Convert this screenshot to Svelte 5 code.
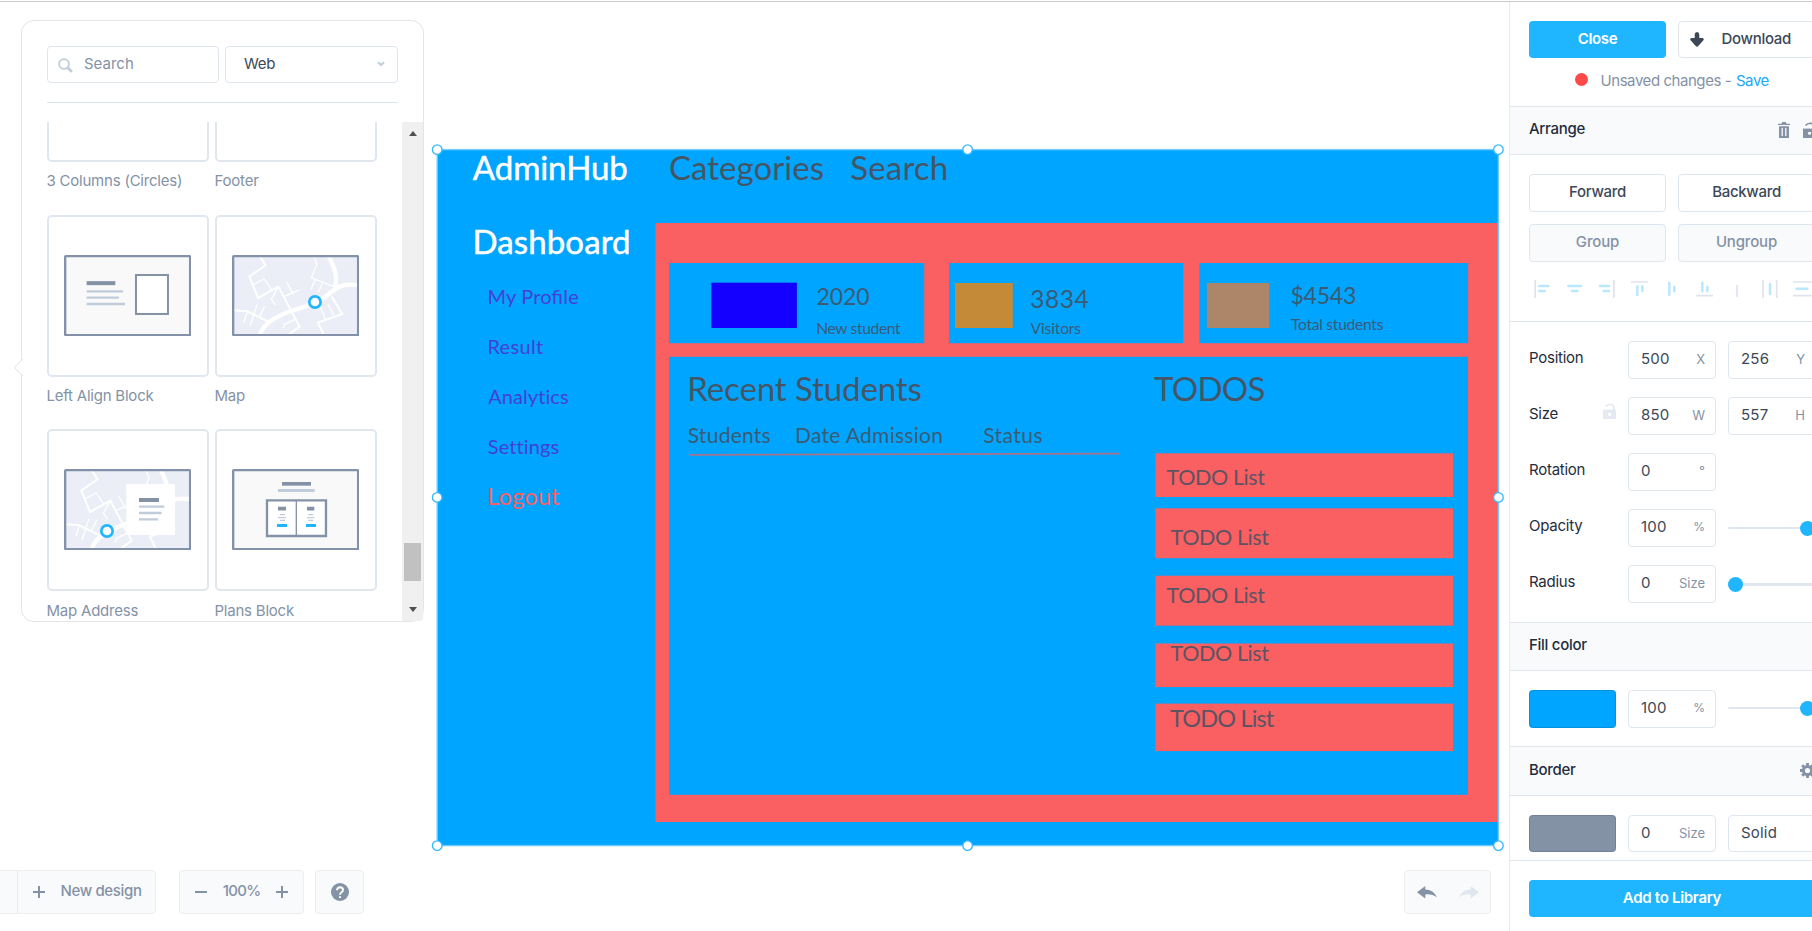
<script>
  const labels = [
    // text, x, baseline, size, length, colour
    ['AdminHub', 472.8, 180, 33, 155, '#fff'],
    ['Categories', 669, 180, 33, 155, '#455565'],
    ['Search', 850.3, 180, 33, 97.9, '#455565'],
    ['Dashboard', 472.6, 254.2, 33, 158, '#fff'],
    ['My Profile', 487.4, 303.5, 20, 91.3, '#4540d2'],
    ['Result', 487.4, 353.5, 20, 55.8, '#4540d2'],
    ['Analytics', 488.3, 403.5, 20, 80.3, '#4540d2'],
    ['Settings', 487.8, 453.7, 20, 71.3, '#4540d2'],
    ['Logout', 487.2, 504.5, 23, 72.4, '#f95f62'],
    ['2020', 816.6, 305.2, 23, 53, '#3b5b75'],
    ['New student', 816.2, 334.3, 15.6, 84.4, '#3b5b75'],
    ['3834', 1030.3, 308.4, 24.5, 58.4, '#3b5b75'],
    ['Visitors', 1030.5, 334.2, 15.6, 50.6, '#3b5b75'],
    ['$4543', 1290.5, 304.2, 23, 65.8, '#3b5b75'],
    ['Total students', 1291, 330.4, 15.6, 92.4, '#3b5b75'],
    ['Recent Students', 687.3, 401.2, 33, 234.5, '#455565'],
    ['Students', 687.7, 443.2, 21, 83, '#3b5b75'],
    ['Date Admission', 795, 443.2, 21, 148, '#3b5b75'],
    ['Status', 983.2, 443.2, 21, 59.3, '#3b5b75'],
    ['TODOS', 1154, 401.2, 33, 111.5, '#455565'],
    ['TODO List', 1166.6, 485.3, 21.5, 98.3, '#5c5463'],
    ['TODO List', 1170.6, 544.5, 21.5, 98.3, '#5c5463'],
    ['TODO List', 1166.6, 603.3, 21.5, 98.3, '#5c5463'],
    ['TODO List', 1170.6, 660.5, 21.5, 98.3, '#5c5463'],
    ['TODO List', 1170, 726.5, 23.5, 104.2, '#5c5463']
  ];
  const todos = [[453.3, 43.7], [508.3, 49.9], [575.7, 50], [643.5, 43.6], [703.6, 47.5]];
  const handles = [
    [437.2, 149.6], [967.6, 149.6], [1498.4, 149.6],
    [437.2, 497.4], [1498.4, 497.4],
    [437.2, 845.6], [967.6, 845.6], [1498.4, 845.6]
  ];
</script>

{#snippet map()}
  <g transform="translate(-12 -15)" fill="none" stroke="#fff">
    <path d="M15 18h376v238H15z" fill="#ebeef6" stroke="none" />
    <g stroke-width="6">
      <path d="M96 20L113 46L64 79L90 144L151 110L215 230L182 254" />
      <path d="M15 181L58 184L122 216" />
      <path d="M311 140L343 192L270 218L287 254" />
    </g>
    <path d="M94 258C106 218 146 199 195 181C246 166 286 152 312 124C337 104 360 101 394 106" stroke-width="13" />
    <path d="M303 20C320 52 330 83 321 110" stroke-width="13" />
    <g stroke-width="4">
      <path d="M75 104L109 87L130 119M151 110L130 148L144 166M176 96L196 133M166 141L214 120" />
      <path d="M258 20L267 42L250 84L320 111M262 88L248 120M285 96L271 127" />
      <path d="M58 184L48 217M87 164L66 228M110 169L93 203M200 208L170 223L165 236M277 170L292 207M300 164L318 196" />
    </g>
  </g>
{/snippet}

{#snippet frame()}
  <rect x="3.5" y="3.5" width="375" height="237" rx="2" fill="none" stroke="#8492a9" stroke-width="7" />
{/snippet}

{#snippet lock()}
  <svg class="lock" viewBox="0 0 13 16"><path d="M2.6 3.6Q4.6.9 7.8 1.3Q11 1.8 11 5.5V7" fill="none" stroke="currentColor" stroke-width="1.7" /><path d="M0 6.600h13V16H0z" fill="currentColor" /><path d="M5.200 10h2.700v2.600H5.200z" fill="#fff" /></svg>
{/snippet}

{#snippet field(value, unit)}
  <div class="field"><span>{value}</span><small class:percent={unit === '%'}>{unit}</small></div>
{/snippet}

<div class="page">
  <main>
    <svg class="canvas" width="1509" height="931" viewBox="0 0 1509 931">
      <rect x="437" y="149.5" width="1061.5" height="696" fill="#00a5ff" />
      <rect x="655.3" y="223" width="843" height="599" fill="#fa5f62" />
      <g fill="#00a5ff">
        <rect x="669" y="263" width="255.2" height="80.2" />
        <rect x="949" y="263" width="234.3" height="80.2" />
        <rect x="1199.300" y="263" width="268.8" height="80.2" />
        <rect x="669" y="356.8" width="799" height="438" />
      </g>
      <rect x="711.3" y="282.7" width="85.6" height="45.3" fill="#1400ff" />
      <rect x="955" y="283" width="57.8" height="45" fill="#c58a37" />
      <rect x="1206.8" y="283" width="62.4" height="45" fill="#ad8569" />
      {#each todos as [y, h]}
        <rect x="1155.3" {y} width="297.7" height={h} fill="#fa5f62" />
      {/each}
      <path d="M689 454.800L1119.300 453.700" stroke="#a87388" stroke-width="1.7" />
      {#each labels as [text, x, y, size, length, fill]}
        <text {x} {y} font-size={size} textLength={length} {fill} class:liga={text === 'My Profile'} class:title={fill === '#fff'}>{text}</text>
      {/each}
      <rect x="437.2" y="149.6" width="1061.2" height="696" fill="none" stroke="#73ccff" stroke-width="1.4" />
      {#each handles as [cx, cy]}
        <circle {cx} {cy} r="4.8" fill="#fff" stroke="#35b9fb" stroke-width="1.3" />
      {/each}
    </svg>

    <section class="palette">
      <svg class="pointer" width="9" height="17" viewBox="0 0 9 17"><path d="M9 .5C7.500 .5 7 1.500 6 3L1.500 7Q.3 8.500 1.500 10L6 14Q7 16 9 16.500" fill="#fff" stroke="#e1e3e6" /></svg>
      <div class="filters">
        <div class="search">
          <svg width="15" height="15" viewBox="0 0 15 15" fill="none" stroke="#c0ccda"><circle cx="6" cy="6" r="4.9" stroke-width="1.8" /><path d="M10 10l3 3" stroke-width="3" stroke-linecap="round" /></svg>
          <span>Search</span>
        </div>
        <div class="select">
          <span>Web</span>
          <svg width="8" height="6" viewBox="0 0 8 6"><path d="M1 1.300L4 4L7 1.300" fill="none" stroke="#c6d1de" stroke-width="2.4" /></svg>
        </div>
      </div>
      <div class="list">
        <div class="items">
          <figure><div class="thumb"></div><figcaption>3 Columns (Circles)</figcaption></figure>
          <figure><div class="thumb"></div><figcaption>Footer</figcaption></figure>
          <figure>
            <div class="thumb">
              <svg viewBox="0 0 382 244">
                <rect width="382" height="244" fill="#f9f9f9" />
                {@render frame()}
                <rect x="216" y="60" width="96" height="117" fill="#fff" stroke="#8492a6" stroke-width="6" />
                <path d="M68 84.500h86" stroke="#8492a6" stroke-width="12" />
                <path d="M68 109h109M68 128h97M68 147h115" stroke="#c0ccda" stroke-width="7" />
              </svg>
            </div>
            <figcaption>Left Align Block</figcaption>
          </figure>
          <figure>
            <div class="thumb">
              <svg viewBox="0 0 382 244">
                {@render map()}
                {@render frame()}
                <circle cx="249" cy="141" r="17" fill="#fff" stroke="#20b5ff" stroke-width="8" />
              </svg>
            </div>
            <figcaption>Map</figcaption>
          </figure>
          <figure>
            <div class="thumb">
              <svg viewBox="0 0 382 244">
                {@render map()}
                <rect x="187" y="45" width="146" height="153" fill="#fff" />
                {@render frame()}
                <path d="M225 93h60" stroke="#8492a6" stroke-width="12" />
                <path d="M225 113h76M225 132h68M225 151h57" stroke="#c0ccda" stroke-width="7" />
                <circle cx="129" cy="186" r="17" fill="#fff" stroke="#20b5ff" stroke-width="8" />
              </svg>
            </div>
            <figcaption>Map Address</figcaption>
          </figure>
          <figure>
            <div class="thumb">
              <svg viewBox="0 0 382 244">
                <rect width="382" height="244" fill="#f9f9f9" />
                {@render frame()}
                <path d="M150 44.500h87" stroke="#8492a6" stroke-width="11" />
                <path d="M138 64.500h110" stroke="#c0ccda" stroke-width="9" />
                <path d="M105 94h177v107H105z" fill="#fff" stroke="#8492a6" stroke-width="7" />
                <path d="M193 94v107" stroke="#8492a6" stroke-width="4" />
                <path d="M138 119h24M225 119h22" stroke="#8492a6" stroke-width="11" />
                <path d="M144 137h15M138 146h24M144 154h15M229 137h15M225 146h22M229 154h15" stroke="#c0ccda" stroke-width="4" />
                <path d="M135 169.500h30M222 169.500h30" stroke="#20b5ff" stroke-width="9" />
              </svg>
            </div>
            <figcaption>Plans Block</figcaption>
          </figure>
        </div>
        <div class="scrollbar"><i class="up"></i><b></b><i class="down"></i></div>
      </div>
    </section>

    <footer>
      <div class="tool design">
        <i class="stub"></i>
        <svg width="12" height="12" viewBox="0 0 12 12"><path d="M6 0v12M0 6h12" stroke="#8492a6" stroke-width="2" /></svg>
        <span>New design</span>
      </div>
      <div class="tool zoom">
        <svg width="12" height="12" viewBox="0 0 12 12"><path d="M0 6h12" stroke="#8492a6" stroke-width="2" /></svg>
        <span>100%</span>
        <svg width="12" height="12" viewBox="0 0 12 12"><path d="M6 0v12M0 6h12" stroke="#8492a6" stroke-width="2" /></svg>
      </div>
      <div class="tool help">
        <svg width="18" height="18" viewBox="0 0 18 18"><circle cx="9" cy="9" r="9" fill="#8492a6" /><path d="M6 7.300Q6 4.300 9 4.300Q12 4.400 12 7Q12 8.300 10.500 9.300Q9 10.200 9 11.700" fill="none" stroke="#fff" stroke-width="1.900" /><path d="M8 13.200h2v1.900H8z" fill="#fff" /></svg>
      </div>
      <div class="tool history">
        <svg width="20" height="13" viewBox="0 0 20 13" fill="#8492a6"><path d="M0 6.300L8.300 0V3.500Q16.500 3.500 20 11.500Q15 7.600 8.300 8.400V12.600Z" /></svg>
        <svg width="20" height="13" viewBox="0 0 20 13" fill="#e0e6ed"><path d="M20 6.300L11.700 0V3.500Q3.500 3.500 0 11.500Q5 7.600 11.700 8.400V12.600Z" /></svg>
      </div>
    </footer>
  </main>

  <aside>
    <div class="head">
      <div class="pair">
        <div class="btn primary">Close</div>
        <div class="btn download"><svg width="14" height="15" viewBox="0 0 14 15"><path d="M7 0Q9.300 0 9.300 2.500V6H12.500Q14.500 6.500 13.400 8.200L8.300 14Q7 15.400 5.700 14L.6 8.200Q-.5 6.500 1.500 6H4.700V2.500Q4.700 0 7 0Z" fill="#3c4858" /></svg><span>Download</span></div>
      </div>
      <div class="status"><i></i><span>Unsaved changes - <em>Save</em></span></div>
    </div>

    <h3>Arrange
      <span class="actions">
        <svg width="12" height="16" viewBox="0 0 12 16" fill="#8492a6"><path d="M0 1.700h3.500L4.300 0h3.400l.8 1.700H12v1.400H0zM1 4.300h10V16H1z" /><path d="M4.200 6v8M7.800 6v8" stroke="#f9fafc" stroke-width="1.3" /></svg>
        {@render lock()}
      </span>
    </h3>
    <div class="arrange">
      <div class="pair"><div class="btn">Forward</div><div class="btn">Backward</div></div>
      <div class="pair"><div class="btn off">Group</div><div class="btn off">Ungroup</div></div>
      <svg class="aligns" width="290" height="18" viewBox="0 0 870 54" fill="none" stroke-width="5">
        <g stroke="#e0e3eb">
          <path d="M15.500 0v54M252 0v54M303 6h51M498 47h51M621 15v36M699 0v54M740 0v54M789 6h56M789 47h56" />
        </g>
        <g stroke="#b8e8ff" stroke-width="7.5" stroke-linecap="round">
          <path d="M28 18h27M28 33h16M115 18h38M126 33h16M210 18h27M221 33h16M322 19v26M337 19v14M418 8v36M433 20v14M517 8v26M532 20v14M720 12v30M800 26h32" />
        </g>
      </svg>
    </div>

    <div class="props">
      <div class="row"><label>Position</label>{@render field('500', 'X')}{@render field('256', 'Y')}</div>
      <div class="row"><label>Size</label><span class="ratio">{@render lock()}</span>{@render field('850', 'W')}{@render field('557', 'H')}</div>
      <div class="row"><label>Rotation</label>{@render field('0', '°')}</div>
      <div class="row"><label>Opacity</label>{@render field('100', '%')}<div class="slider full"><i></i></div></div>
      <div class="row"><label>Radius</label>{@render field('0', 'Size')}<div class="slider thick"><i></i></div></div>
    </div>

    <h3>Fill color</h3>
    <div class="fill row"><div class="swatch blue"></div>{@render field('100', '%')}<div class="slider full"><i></i></div></div>

    <h3 class="border">Border
      <svg class="gear" width="15" height="15" viewBox="0 0 15 15"><g stroke="#8492a6" stroke-width="2.800"><path d="M7.500 0v15M0 7.500h15M2.200 2.200l10.600 10.600M12.800 2.200L2.200 12.800" /></g><circle cx="7.500" cy="7.500" r="4.100" fill="#f9fafc" stroke="#8492a6" stroke-width="3" /></svg>
    </h3>
    <div class="stroke row"><div class="swatch gray"></div>{@render field('0', 'Size')}{@render field('Solid', '')}</div>
    <div class="library"><div class="btn primary">Add to Library</div></div>
  </aside>
</div>

<style>
  :global(body) { overflow: hidden; background: #fff; }
  .page { display: flex; width: 1812px; height: 931px; overflow: hidden; border-top: 1px solid #fff; box-sizing: border-box; font: 400 15px/20px Inter, sans-serif; letter-spacing: -0.22px; color: #8492a6; box-shadow: inset 0 1px #c8cacb; }
  .page * { box-sizing: border-box; }
  svg { display: block; flex: none; }
  main { position: relative; flex: none; width: 1509px; display: flex; flex-direction: column; justify-content: space-between; padding: 19px 18px 17px 21px; }
  .canvas { position: absolute; left: 0; top: -1px; font-family: Lato, sans-serif; letter-spacing: 0; }
  .canvas text { font-variant-ligatures: none; }
  .canvas .liga { font-variant-ligatures: normal; }
  .canvas .title { stroke: #fff; stroke-width: 0.5px; }

  .palette { position: relative; width: 403px; height: 602px; border: 1px solid #e3e5e8; border-radius: 13px; background: #fff; }
  .pointer { position: absolute; left: -8px; top: 338px; }
  .filters { display: flex; gap: 6px; margin: 25px 25px 0 25px; height: 57px; border-bottom: 1px solid #dde4ec; }
  .search, .select { display: flex; align-items: center; height: 37px; width: 172px; border: 1px solid #dfe5ed; border-radius: 4px; padding: 0 12px 2px 10px; flex: none; }
  .select { width: 173px; padding-left: 18px; justify-content: space-between; color: #3c4858; }
  .search svg { margin-right: 11px; margin-top: 3px; }
  .search span { letter-spacing: 0; }
  .list { display: flex; justify-content: space-between; height: 499px; margin-top: 19px; padding-left: 25px; overflow: hidden; border-bottom-right-radius: 3px; }
  .items { display: grid; grid-template-columns: 162px 162px; grid-auto-rows: 214px; column-gap: 6px; margin-top: -122px; height: 642px; }
  figure { margin: 0; }
  figure:nth-child(n + 3) { padding-top: 1px; }
  .thumb { height: 162px; border: 2px solid #e0e6ed; border-radius: 5px; padding: 38px 15px; background: #fff; }
  .thumb svg { width: 127.3px; height: 81.3px; }
  figcaption { margin-top: 9px; margin-left: -0.5px; white-space: nowrap; }
  figure:nth-child(n + 5) figcaption { margin-top: 10px; }
  .scrollbar { width: 21px; background: #f0f0f0; display: flex; flex-direction: column; align-items: center; padding: 9px 0 9px; }
  .scrollbar b { width: 17px; height: 38px; background: #c1c1c1; margin: auto 0 26px; }
  .scrollbar i { border: 4.5px solid transparent; }
  .up { border-top-width: 0 !important; border-bottom: 5px solid #505050 !important; }
  .down { border-bottom-width: 0 !important; border-top: 5px solid #505050 !important; }

  footer { display: flex; height: 44px; margin-left: -25px; font-weight: 500; letter-spacing: -0.35px; position: relative; }
  .tool { display: flex; align-items: center; height: 44px; border: 1px solid #eceef1; border-radius: 4px; background: #f9fafc; }
  .tool span { margin-top: -3px; white-space: nowrap; }
  .design { width: 160px; }
  .stub { width: 21px; height: 42px; border-right: 1px solid #e6e9ed; margin-right: 15px; }
  .design span { margin-left: 15.5px; }
  .zoom { width: 125px; margin-left: 23px; padding: 0 15px; justify-content: space-between; letter-spacing: -0.7px; }
  .help { width: 49px; margin-left: 11px; padding-left: 14.5px; }
  .history { width: 87px; margin-left: auto; padding: 0 11.5px; justify-content: space-between; }

  aside { position: relative; flex: none; width: 327px; height: 929px; margin-top: 1px; border-left: 1px solid #e8ebef; background: #fff; }
  .pair { display: flex; gap: 12px; }
  .btn { display: flex; align-items: center; justify-content: center; width: 137px; height: 38px; flex: none; padding-bottom: 3px; border: 1px solid #e0e6ed; border-radius: 4px; color: #3c4858; font-weight: 500; background: #fff; letter-spacing: -0.3px; }
  .btn.primary { height: 37px; border: 0; padding-bottom: 1px; background: #20b5ff; color: #fff; font-weight: 600; }
  .btn.off { background: #f9fafc; color: #8492a6; letter-spacing: -0.15px; }
  .head { height: 104px; padding: 19px 0 0 19px; }
  .btn.download { height: 37px; justify-content: flex-start; padding: 0 0 1px 11px; }
  .download span { margin-left: 17.5px; }
  .download svg { margin-top: 1px; }
  .status { display: flex; align-items: center; margin: 13px 0 0 46px; letter-spacing: -0.44px; white-space: nowrap; }
  .status i { width: 13px; height: 13px; border-radius: 50%; background: #ff4949; margin: -3px 12.5px 0 0; }
  em { font-style: normal; color: #20a8ff; margin-left: 1px; }
  h3 { display: flex; align-items: center; height: 49px; margin: 0; padding: 0 0 4px 19px; border: solid #e0e6ed; border-width: 1px 0; background: #f9fafc; color: #1f2d3d; font: inherit; font-weight: 500; letter-spacing: -0.28px; }
  .actions { display: flex; gap: 13px; margin: 2px 0 0 auto; width: 58px; color: #8492a6; }
  .lock { width: 13px; height: 16px; }
  .arrange { height: 166px; padding: 19px 0 0 19px; }
  .arrange .pair { margin-bottom: 12px; }
  .aligns { margin: 18px 0 0 1px; }
  .props { height: 301px; border-top: 1px solid #e0e6ed; padding: 19px 0 0 19px; }
  .row { display: flex; height: 38px; margin-bottom: 18.1px; }
  label { width: 99px; padding-top: 7px; color: #1f2d3d; letter-spacing: -0.25px; flex: none; }
  .ratio { margin: 6px 12px 0 -25px; color: #e5e9f2; }
  .field { display: flex; align-items: center; justify-content: space-between; width: 88px; height: 38px; flex: none; margin-right: 12px; padding: 0 10px 2px 12px; border: 1px solid #e0e6ed; border-radius: 4px; color: #3c4858; letter-spacing: 0.2px; background: #fff; }
  .field small { font-size: 13px; color: #8492a6; letter-spacing: 0; }
  .field .percent { font-size: 12px; }
  .slider { width: 87px; height: 2px; margin-top: 18px; border-radius: 1px; background: #e0e6ed; position: relative; flex: none; }
  .slider.thick { height: 3px; }
  .slider i { position: absolute; top: -6.5px; left: 0; width: 15px; height: 15px; border-radius: 50%; background: #20b5ff; }
  .slider.full i { left: 72px; }
  .fill { height: 75px; margin: 0; padding: 19px 0 0 19px; }
  .fill .slider { margin-top: 17px; }
  .swatch { width: 87px; height: 38px; border-radius: 4px; border: 1px solid rgba(30, 60, 90, .18); margin-right: 12px; flex: none; }
  .blue { background: #00a5ff; }
  .gray { background: #8492a6; }
  .border { height: 50px; padding-bottom: 3px; }
  .gear { margin: 1px 21px 0 auto; }
  .stroke { height: 64px; margin: 0; padding: 19px 0 0 19px; }
  .stroke .field, .stroke .swatch { height: 37px; }
  .library { border-top: 1px solid #e0e6ed; padding: 19px 0 0 19px; height: 71px; }
  .library .btn { width: 286px; }
</style>
